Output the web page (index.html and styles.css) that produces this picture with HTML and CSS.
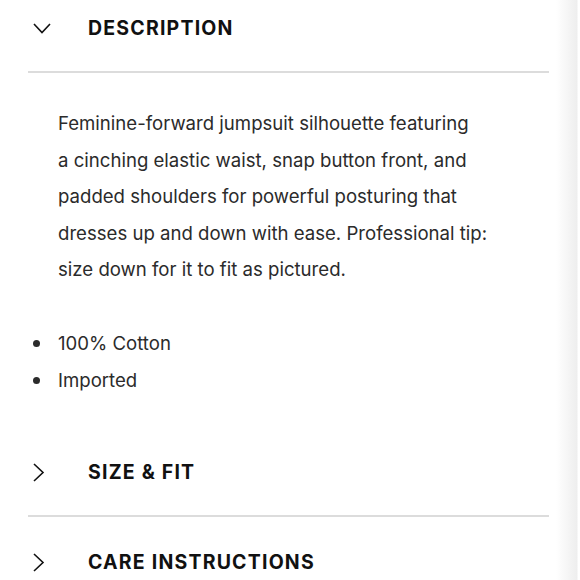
FILE: index.html
```html
<!DOCTYPE html>
<html lang="en">
<head>
<meta charset="utf-8">
<link rel="stylesheet" href="styles.css">
</head>
<body>
<div class="accordion">
  <section class="item open">
    <div class="head">
      <span class="chev"><svg width="18" height="11" viewBox="0 0 18 11"><path d="M1 1 L9 9.5 L17 1" fill="none" stroke="#111" stroke-width="1.6"/></svg></span>
      <h2 class="title">DESCRIPTION</h2>
    </div>
    <div class="body">
      <p class="desc">Feminine-forward jumpsuit silhouette featuring<br>a cinching elastic waist, snap button front, and<br>padded shoulders for powerful posturing that<br>dresses up and down with ease. Professional tip:<br>size down for it to fit as pictured.</p>
      <ul class="facts">
        <li>100% Cotton</li>
        <li>Imported</li>
      </ul>
    </div>
  </section>
  <section class="item">
    <div class="head">
      <span class="chev"><svg width="12" height="19" viewBox="0 0 12 19"><path d="M1 1 L10 9.5 L1 18" fill="none" stroke="#111" stroke-width="1.6"/></svg></span>
      <h2 class="title">SIZE &amp; FIT</h2>
    </div>
  </section>
  <section class="item">
    <div class="head">
      <span class="chev"><svg width="12" height="19" viewBox="0 0 12 19"><path d="M1 1 L10 9.5 L1 18" fill="none" stroke="#111" stroke-width="1.6"/></svg></span>
      <h2 class="title">CARE INSTRUCTIONS</h2>
    </div>
  </section>
</div>
</body>
</html>
```
FILE: styles.css
```css
html {
  background: linear-gradient(to right, #fff 0, #fff 556px, #eeeeee 577px, #fff 578px);
  min-height: 100%;
}
body {
  margin: 0;
  font-family: "Inter", "Liberation Sans", sans-serif;
  color: #2b2b2b;
  overflow: hidden;
}
.accordion {
  margin-top: -17px;
  margin-left: 28px;
  width: 521px;
}
.head {
  height: 90px;
  padding-top: 2px;
  display: flex;
  align-items: center;
  border-bottom: 2px solid #dcdcdc;
  box-sizing: border-box;
}
.chev {
  width: 60px;
  padding-left: 5px;
  box-sizing: border-box;
  display: flex;
  align-items: center;
}
.title {
  margin: 0;
  font-size: 19.5px;
  font-weight: 700;
  letter-spacing: 1.2px;
  color: #111;
}
.body {
  padding: 32px 0 29px 30px;
}
.desc {
  margin: 0;
  font-size: 18.6px;
  line-height: 36.6px;
  white-space: nowrap;
}
.facts {
  list-style: none;
  margin: 37px 0 0 0;
  padding: 0;
  font-size: 18.6px;
  line-height: 36.6px;
}
.facts li {
  position: relative;
}
.facts li::before {
  content: "";
  position: absolute;
  left: -25px;
  top: 15px;
  width: 7px;
  height: 7px;
  border-radius: 50%;
  background: #2b2b2b;
}
```
